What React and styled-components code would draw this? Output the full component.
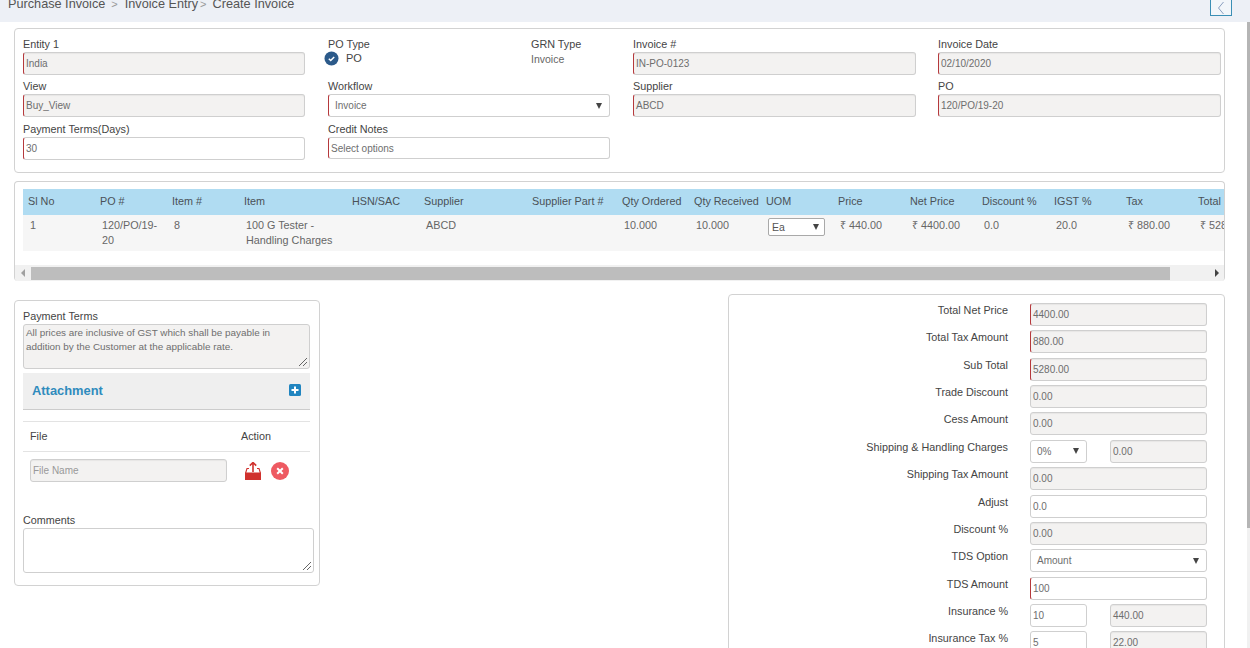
import React from 'react';
import styled, { createGlobalStyle } from 'styled-components';

const Global = createGlobalStyle`
  html, body { margin: 0; padding: 0; height: 648px; overflow: hidden; background: #fff; }
  body { font-family: "Liberation Sans", Arial, sans-serif; font-size: 11px; color: #444; }
  * { box-sizing: border-box; }
`;

const Page = styled.div`
  position: relative;
  width: 1250px;
  height: 648px;
  overflow: hidden;
`;
const PageScroll = styled.div`
  position: absolute;
  top: 22px;
  right: 0;
  bottom: 0;
  width: 3px;
  background: #f1f1f1;
`;
const PageThumb = styled.div`
  height: 506px;
  background: #b5b5b5;
`;
const TopBar = styled.div`
  height: 22px;
  background: #edf0f6;
  display: flex;
  align-items: flex-start;
  justify-content: space-between;
  padding: 0 18px 0 8px;
`;
const Crumbs = styled.div`
  display: flex;
  align-items: center;
  height: 8px;
  font-size: 12.7px;
  color: #555;
`;
const CrumbSep = styled.span`
  margin: ${p => p.$tight ? '0 6px 0 2px' : '0 7px 0 6px'};
  color: #999;
  font-size: 11px;
`;
const Toggle = styled.button`
  width: 22px;
  height: 16px;
  padding: 0;
  border: 1px solid #3b8fb5;
  border-top: none;
  background: #f2f6fa;
  display: flex;
  align-items: center;
  justify-content: center;
`;
const Content = styled.div`
  padding: 6px 25px 0 14px;
`;
const Card = styled.section`
  border: 1px solid #d2d2d2;
  border-radius: 4px;
  background: #fff;
`;
const HeadCard = styled(Card)`
  height: 145px;
  padding: 8px 3px 0 8px;
  display: grid;
  grid-template-columns: repeat(4, 283px);
  grid-template-rows: 42px 43px 42px;
  column-gap: 22px;
`;
const Field = styled.div`
  display: flex;
  flex-direction: column;
`;
const Label = styled.label`
  display: block;
  font-size: 10.8px;
  line-height: 14px;
  margin-bottom: 1px;
  color: #444;
`;
const Box = styled.div`
  width: ${p => p.$w || '100%'};
  height: ${p => p.$h || 23}px;
  flex: none;
  display: flex;
  align-items: center;
  justify-content: space-between;
  padding: 0 ${p => p.$select ? 7 : 3}px 0 ${p => p.$select ? 6 : 2}px;
  border: 1px solid #cfcfcf;
  ${p => p.$req && 'border-left: 1px solid #b5393c;'}
  border-radius: 3px;
  background: ${p => p.$off ? '#f3f2f1' : '#fff'};
  box-shadow: ${p => p.$off ? 'inset 0 1px 1px rgba(0,0,0,.05)' : 'none'};
  font-size: 10px;
  color: #6e6e6e;
`;
const Caret = styled.span`
  width: 0;
  height: 0;
  border-left: 3px solid transparent;
  border-right: 3px solid transparent;
  border-top: 6px solid #444;
`;
const TypeSplit = styled.div`
  display: grid;
  grid-template-columns: 203px 1fr;
`;
const RadioRow = styled.div`
  display: flex;
  align-items: center;
  gap: 7px;
  margin-left: -4px;
  height: 11px;
  font-size: 11px;
  color: #444;
`;
const RadioIcon = styled.svg`
  margin-top: 2px;
  flex: none;
`;
const PlainValue = styled.div`
  font-size: 10.5px;
  color: #666;
  line-height: 14px;
`;

const TableCard = styled(Card)`
  margin-top: 8px;
  height: 100px;
  border-bottom: none;
  padding-top: 7px;
  overflow: hidden;
  display: flex;
  flex-direction: column;
  justify-content: space-between;
`;
const TableClip = styled.div`
  margin-left: 8px;
  overflow: hidden;
`;
const Table = styled.table`
  border-collapse: collapse;
  table-layout: fixed;
  width: 1242px;
`;
const Th = styled.th`
  height: 26px;
  background: #b0dcf2;
  color: #4a5157;
  font-size: 10.8px;
  font-weight: 400;
  text-align: left;
  padding: 0 0 2px 5px;
  white-space: nowrap;
`;
const Td = styled.td`
  height: 36px;
  background: #f6f6f6;
  color: #666;
  font-size: 10.8px;
  line-height: 15px;
  vertical-align: top;
  padding: 3px 3px 0 7px;
  white-space: ${p => p.$wrap ? 'normal' : 'nowrap'};
`;
const MiniSelect = styled.div`
  width: 57px;
  height: 18px;
  border: 1px solid #a9a9a9;
  border-radius: 2px;
  background: #fff;
  font-size: 10.5px;
  color: #555;
  display: flex;
  align-items: center;
  justify-content: space-between;
  padding: 0 5px 0 3px;
`;
const HScroll = styled.div`
  height: 16px;
  display: flex;
  align-items: center;
  background: #f1f1f1;
`;
const Arrow = styled.div`
  width: 16px;
  flex: none;
  display: flex;
  justify-content: center;
`;
const ScrollTrack = styled.div`
  flex: 1;
  height: 13px;
`;
const ScrollThumb = styled.div`
  width: 1139px;
  height: 13px;
  background: #bdbdbd;
`;

const Lower = styled.div`
  display: flex;
  justify-content: space-between;
  align-items: flex-start;
  margin-top: 13px;
`;
const LeftCard = styled(Card)`
  width: 306px;
  height: 286px;
  margin-top: 6px;
  padding: 8px 8px 0 8px;
`;
const TextArea = styled.div`
  position: relative;
  width: ${p => p.$w}px;
  height: ${p => p.$h}px;
  border: 1px solid #cfcfcf;
  border-radius: 3px;
  background: ${p => p.$off ? '#f3f2f1' : '#fff'};
  font-size: 9.9px;
  line-height: 14px;
  color: #6e6e6e;
  padding: 1px 2px;
`;
const Grip = styled.svg`
  position: absolute;
  right: 1px;
  bottom: 1px;
`;
const AttachBar = styled.div`
  width: 287px;
  height: 37px;
  margin-top: 4px;
  background: #efefef;
  border-bottom: 1px solid #ccc;
  display: flex;
  align-items: center;
  justify-content: space-between;
  padding: 0 9px 2px;
`;
const AttachTitle = styled.span`
  font-size: 12.9px;
  font-weight: 700;
  color: #2f8bbd;
`;
const FileHead = styled.div`
  width: 287px;
  height: 31px;
  margin-top: 11px;
  border-top: 1px solid #e3e3e3;
  border-bottom: 1px solid #e3e3e3;
  display: grid;
  grid-template-columns: 211px 1fr;
  align-items: center;
  padding: 0 0 2px 7px;
  font-size: 10.8px;
  color: #444;
`;
const FileRow = styled.div`
  width: 287px;
  display: flex;
  align-items: center;
  padding: 7px 0 0 7px;
  gap: 18px;
`;
const Icons = styled.div`
  display: flex;
  align-items: center;
  gap: 10px;
`;
const Placeholder = styled.span`
  color: #999;
`;
const CommentLabel = styled(Label)`
  margin-top: 31px;
`;

const RightCard = styled(Card)`
  width: 497px;
  height: 400px;
  padding: 7.8px 0 0 0;
  display: flex;
  flex-direction: column;
  gap: 4.4px;
`;
const SumRow = styled.div`
  display: grid;
  grid-template-columns: 279px 177px;
  column-gap: 22px;
  height: 23px;
`;
const SumLabel = styled.div`
  text-align: right;
  font-size: 10.8px;
  line-height: 14px;
  color: #444;
`;
const Pair = styled.div`
  display: grid;
  grid-template-columns: 57px 97px;
  column-gap: 23px;
`;

const Sep = ({ tight }) => <CrumbSep $tight={tight}>&gt;</CrumbSep>;

const Radio = () => (
  <RadioIcon width="15" height="15" viewBox="0 0 15 15">
    <circle cx="7.5" cy="7.5" r="7" fill="#2c5a8a" />
    <path d="M4.8 7.8 6.7 9.5 10.2 5.9" fill="none" stroke="#fff" strokeWidth="1.5" />
  </RadioIcon>
);

const ResizeGrip = () => (
  <Grip width="10" height="10" viewBox="0 0 10 10">
    <path d="M1 9 9 1M5 9 9 5" stroke="#666" strokeWidth="1" />
  </Grip>
);

const cols = [72, 72, 72, 108, 72, 108, 90, 72, 72, 72, 72, 72, 72, 72, 72, 72];
const titles = ['Sl No', 'PO #', 'Item #', 'Item', 'HSN/SAC', 'Supplier', 'Supplier Part #', 'Qty Ordered', 'Qty Received', 'UOM', 'Price', 'Net Price', 'Discount %', 'IGST %', 'Tax', 'Total'];

const summary = [
  { l: 'Total Net Price', v: '4400.00', off: true, req: true },
  { l: 'Total Tax Amount', v: '880.00', off: true, req: true },
  { l: 'Sub Total', v: '5280.00', off: true, req: true },
  { l: 'Trade Discount', v: '0.00', off: true },
  { l: 'Cess Amount', v: '0.00', off: true },
  { l: 'Shipping & Handling Charges', sel: '0%', v: '0.00' },
  { l: 'Shipping Tax Amount', v: '0.00', off: true },
  { l: 'Adjust', v: '0.0' },
  { l: 'Discount %', v: '0.00', off: true },
  { l: 'TDS Option', full: 'Amount' },
  { l: 'TDS Amount', v: '100', req: true },
  { l: 'Insurance %', a: '10', v: '440.00' },
  { l: 'Insurance Tax %', a: '5', v: '22.00' },
];

const InputField = ({ label, value, off, req, w, h, children }) => (
  <Field>
    <Label>{label}</Label>
    {children || <Box $off={off} $req={req} $w={w} $h={h}>{value}</Box>}
  </Field>
);

export default function App() {
  return (
    <Page>
      <Global />
      <TopBar>
        <Crumbs>
          Purchase Invoice<Sep />Invoice Entry<Sep tight />Create Invoice
        </Crumbs>
        <Toggle aria-label="Collapse">
          <svg width="8" height="14" viewBox="0 0 8 14">
            <path d="M6.5 1 1.5 7l5 6" fill="none" stroke="#8a9fc0" strokeWidth="1" />
          </svg>
        </Toggle>
      </TopBar>
      <PageScroll><PageThumb /></PageScroll>
      <Content>
        <HeadCard>
          <InputField label="Entity 1" value="India" off req w="282px" />
          <TypeSplit>
            <Field>
              <Label>PO Type</Label>
              <RadioRow><Radio />PO</RadioRow>
            </Field>
            <Field>
              <Label>GRN Type</Label>
              <PlainValue>Invoice</PlainValue>
            </Field>
          </TypeSplit>
          <InputField label="Invoice #" value="IN-PO-0123" off req />
          <InputField label="Invoice Date" value="02/10/2020" off req />

          <InputField label="View" value="Buy_View" off req w="282px" />
          <InputField label="Workflow">
            <Box $req $select $w="282px">Invoice<Caret /></Box>
          </InputField>
          <InputField label="Supplier" value="ABCD" off req />
          <InputField label="PO" value="120/PO/19-20" off req />

          <InputField label="Payment Terms(Days)" value="30" req w="282px" />
          <InputField label="Credit Notes" value="Select options" req w="282px" h={22} />
        </HeadCard>

        <TableCard>
          <TableClip>
            <Table>
              <colgroup>
                {cols.map((w, i) => <col key={i} style={{ width: w }} />)}
              </colgroup>
              <thead>
                <tr>{titles.map(t => <Th key={t}>{t}</Th>)}</tr>
              </thead>
              <tbody>
                <tr>
                  <Td>1</Td>
                  <Td $wrap>120/PO/19-20</Td>
                  <Td>8</Td>
                  <Td $wrap>100 G Tester - Handling Charges</Td>
                  <Td />
                  <Td>ABCD</Td>
                  <Td />
                  <Td>10.000</Td>
                  <Td>10.000</Td>
                  <Td><MiniSelect>Ea<Caret /></MiniSelect></Td>
                  <Td>₹ 440.00</Td>
                  <Td>₹ 4400.00</Td>
                  <Td>0.0</Td>
                  <Td>20.0</Td>
                  <Td>₹ 880.00</Td>
                  <Td>₹ 5280.00</Td>
                </tr>
              </tbody>
            </Table>
          </TableClip>
          <HScroll>
            <Arrow>
              <svg width="5" height="8" viewBox="0 0 5 8"><path d="M4 0v8L0 4z" fill="#a0a0a0" /></svg>
            </Arrow>
            <ScrollTrack><ScrollThumb /></ScrollTrack>
            <Arrow>
              <svg width="5" height="8" viewBox="0 0 5 8"><path d="M1 0v8l4-4z" fill="#444" /></svg>
            </Arrow>
          </HScroll>
        </TableCard>

        <Lower>
          <LeftCard>
            <Label>Payment Terms</Label>
            <TextArea $off $w={287} $h={45}>
              All prices are inclusive of GST which shall be payable in addition by the Customer at the applicable rate.
              <ResizeGrip />
            </TextArea>
            <AttachBar>
              <AttachTitle>Attachment</AttachTitle>
              <svg width="12" height="12" viewBox="0 0 12 12">
                <rect width="12" height="12" rx="1.5" fill="#2185c0" />
                <path d="M6 2.5v7M2.5 6h7" stroke="#fff" strokeWidth="2" />
              </svg>
            </AttachBar>
            <FileHead><span>File</span><span>Action</span></FileHead>
            <FileRow>
              <Box $off $w="197px"><Placeholder>File Name</Placeholder></Box>
              <Icons>
                <svg width="16" height="18" viewBox="0 0 16 18">
                  <path d="M8 .5V10M4.8 3.6 8 .5l3.2 3.1" fill="none" stroke="#d0312d" strokeWidth="1.6" />
                  <path d="M4 6.5H2L.6 11M12 6.5h2l1.4 4.5" fill="none" stroke="#d0312d" strokeWidth="1.1" />
                  <rect x="0" y="10.5" width="16" height="7.5" fill="#d0312d" />
                </svg>
                <svg width="18" height="18" viewBox="0 0 18 18">
                  <circle cx="9" cy="9" r="9" fill="#ee5a62" />
                  <path d="M6.2 6.2l5.6 5.6M11.8 6.2l-5.6 5.6" stroke="#fff" strokeWidth="2" />
                </svg>
              </Icons>
            </FileRow>
            <CommentLabel>Comments</CommentLabel>
            <TextArea $w={291} $h={45}><ResizeGrip /></TextArea>
          </LeftCard>

          <RightCard>
            {summary.map(r => (
              <SumRow key={r.l}>
                <SumLabel>{r.l}</SumLabel>
                {r.sel ? (
                  <Pair>
                    <Box $select>{r.sel}<Caret /></Box>
                    <Box $off>{r.v}</Box>
                  </Pair>
                ) : r.a ? (
                  <Pair>
                    <Box>{r.a}</Box>
                    <Box $off>{r.v}</Box>
                  </Pair>
                ) : r.full ? (
                  <Box $select>{r.full}<Caret /></Box>
                ) : (
                  <Box $off={r.off} $req={r.req}>{r.v}</Box>
                )}
              </SumRow>
            ))}
          </RightCard>
        </Lower>
      </Content>
    </Page>
  );
}
